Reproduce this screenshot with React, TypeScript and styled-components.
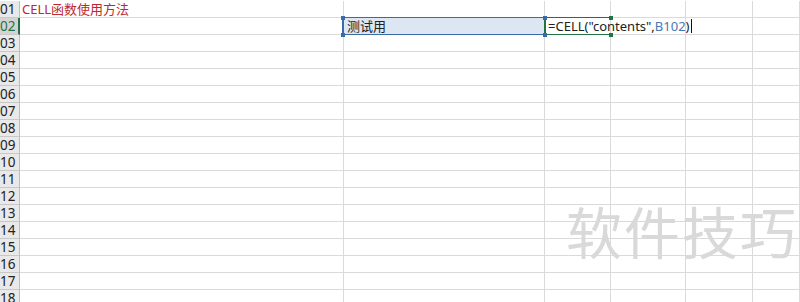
import React from 'react';
import styled, { createGlobalStyle } from 'styled-components';

const GlobalStyle = createGlobalStyle`
  html, body {
    margin: 0;
    padding: 0;
    background: #ffffff;
    overflow: hidden;
  }
`;

const Sheet = styled.div`
  position: relative;
  width: 800px;
  height: 302px;
  overflow: hidden;
  padding-top: 1px;
  box-sizing: border-box;
  font-family: 'Noto Sans', 'Noto Sans CJK SC', sans-serif;
`;

const Grid = styled.div`
  display: grid;
  grid-template-columns: 20px 324px 201px 66px 75px 67px 47px;
  grid-auto-rows: 17px;
`;

const RowHead = styled.div<{ active?: boolean }>`
  box-sizing: border-box;
  background: ${p => (p.active ? '#d3d3d3' : '#e9e9e9')};
  border-bottom: 1px solid #c8c8c8;
  border-right: ${p => (p.active ? '2px solid #217346' : '1px solid #bdbdbd')};
  color: ${p => (p.active ? '#217346' : '#222')};
  font-size: 13.5px;
  line-height: 16px;
  padding-left: 0;
  overflow: hidden;
`;

const Cell = styled.div`
  position: relative;
  box-sizing: border-box;
  border-right: 1px solid #dadada;
  border-bottom: 1px solid #dadada;
  font-size: 13px;
  line-height: 16px;
  white-space: nowrap;
  color: #222;
`;

const TitleCell = styled(Cell)`
  color: #c0282d;
  padding-left: 2px;
  overflow: visible;
  font-size: 13px;
`;

const SourceCell = styled(Cell)`
  background: #dde7f3;
  padding-left: 3px;
  &::after {
    content: '';
    position: absolute;
    left: -2px;
    top: -1px;
    right: -1px;
    bottom: -1px;
    border: 1px solid #3a6aa8;
    border-left-width: 2px;
    pointer-events: none;
  }
`;

const Handle = styled.span<{ side: 'left' | 'right'; edge: 'top' | 'bottom'; color: string }>`
  position: absolute;
  width: 4px;
  height: 4px;
  background: ${p => p.color};
  ${p => (p.side === 'left' ? 'left: -3px;' : 'right: -3px;')}
  ${p => (p.edge === 'top' ? 'top: -2px;' : 'bottom: -3px;')}
  z-index: 2;
`;

const FormulaCell = styled(Cell)`
  overflow: visible;
  padding-left: 3px;
  z-index: 1;
  &::before {
    content: '';
    position: absolute;
    left: -1px;
    top: -1px;
    right: -1px;
    bottom: -1px;
    border-top: 1px solid #217346;
    border-bottom: 1px solid #217346;
    border-left: 2px solid #217346;
    pointer-events: none;
  }
`;

const Ref = styled.span`
  color: #4a78b5;
`;

const Caret = styled.span`
  display: inline-block;
  width: 1px;
  height: 14px;
  background: #111;
  vertical-align: -2px;
  margin-left: 1px;
`;

const Watermark = styled.div`
  position: absolute;
  left: 566px;
  top: 196px;
  font-family: 'Noto Sans CJK SC', sans-serif;
  font-size: 56px;
  letter-spacing: 2px;
  color: #d9d9d9;
  line-height: 1.2;
  white-space: nowrap;
`;

const ROWS = 18;
const EMPTY = 6;

const App: React.FC = () => {
  const rows = Array.from({ length: ROWS }, (_, i) => i + 1);
  return (
    <Sheet>
      <GlobalStyle />
      <Grid>
        {rows.map(r => {
          const label = String(r).padStart(2, '0');
          if (r === 1) {
            return (
              <React.Fragment key={r}>
                <RowHead>{label}</RowHead>
                <TitleCell>CELL函数使用方法</TitleCell>
                {Array.from({ length: EMPTY - 1 }, (_, c) => <Cell key={c} />)}
              </React.Fragment>
            );
          }
          if (r === 2) {
            return (
              <React.Fragment key={r}>
                <RowHead active>{label}</RowHead>
                <Cell />
                <SourceCell>
                  测试用
                  <Handle side="left" edge="top" color="#3a6aa8" />
                  <Handle side="left" edge="bottom" color="#3a6aa8" />
                  <Handle side="right" edge="top" color="#3a6aa8" />
                  <Handle side="right" edge="bottom" color="#3a6aa8" />
                </SourceCell>
                <FormulaCell>
                  =CELL("contents",<Ref>B102</Ref>)<Caret />
                  <Handle side="right" edge="top" color="#217346" />
                  <Handle side="right" edge="bottom" color="#217346" />
                </FormulaCell>
                <Cell />
                <Cell />
                <Cell />
              </React.Fragment>
            );
          }
          return (
            <React.Fragment key={r}>
              <RowHead>{label}</RowHead>
              {Array.from({ length: EMPTY }, (_, c) => <Cell key={c} />)}
            </React.Fragment>
          );
        })}
      </Grid>
      <Watermark>软件技巧</Watermark>
    </Sheet>
  );
};

export default App;
